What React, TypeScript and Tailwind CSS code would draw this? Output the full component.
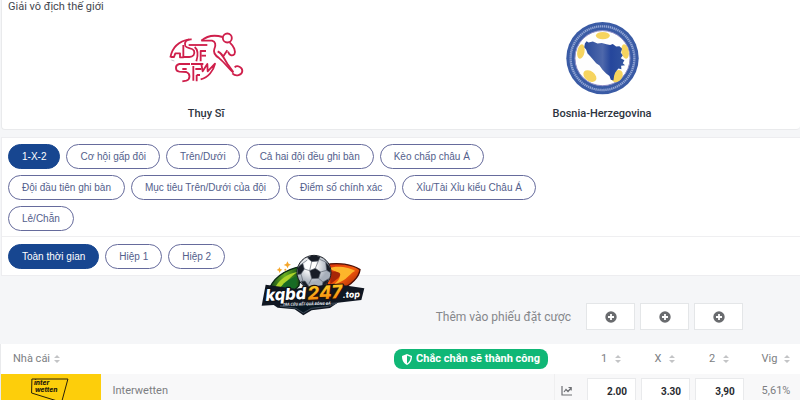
import { useState } from "react";

const MARKETS = [
  ["1-X-2", "Cơ hội gấp đôi", "Trên/Dưới", "Cả hai đội đều ghi bàn", "Kèo chấp châu Á"],
  ["Đội đầu tiên ghi bàn", "Mục tiêu Trên/Dưới của đội", "Điểm số chính xác", "Xỉu/Tài Xỉu kiểu Châu Á"],
  ["Lẻ/Chẵn"],
];
const PERIODS = ["Toàn thời gian", "Hiệp 1", "Hiệp 2"];
const OUTCOMES = ["1", "X", "2"];
const ODDS = ["2.00", "3.30", "3,90"];

function SwissLogo() {
  return (
    <svg viewBox="0 0 276 195" className="h-[65px] w-[92px]" fill="none" stroke="#cf1f4b" strokeWidth="5.5" strokeLinejoin="round" aria-label="Thụy Sĩ">
      <path d="M31 94C36 67 54 46 88 40" />
      <path d="M32 93H42L46 82H60V94H70V57" />
      <path d="M95 40C78 39 72 49 76 60C80 69 96 63 102 74C106 85 99 93 88 93H72" />
      <path d="M86 57H142" />
      <path d="M138 75H122V106M104 63C114 71 116 83 109 106" />
      <path d="M138 89H124" />
      <path d="M90 114H58C44 117 45 135 58 137L79 138C92 143 91 160 79 164L67 166" />
      <path d="M67 129H80M93 114H130M100 120V164M106 129H124M110 147V166" />
      <path d="M110 147H120M124 114L128 136L142 114L143 136L165 113C160 134 145 155 122 160" />
      <path d="M124 44C140 30 164 26 188 33" />
      <path d="M124 44H156C166 47 169 55 163 69C158 81 166 89 178 97C195 111 208 130 220 140" />
      <circle cx="202" cy="36" r="13.5" />
      <path d="M209 49C222 61 228 76 223 85C216 91 208 88 204 77" />
      <path d="M173 76C181 80 187 85 189 92L202 73M190 93L202 113L220 138" />
      <path d="M224 124C232 116 247 124 247 135C246 147 228 154 217 142" />
      <path d="M34 102L43 105" strokeWidth="2" stroke="#a8a8b0" />
    </svg>
  );
}

function BosniaLogo() {
  return (
    <svg viewBox="0 0 256 256" className="h-[85px] w-[85px]" aria-label="Bosnia-Herzegovina">
      <defs>
        <linearGradient id="bosniaMap" x1="0" x2="1">
          <stop offset="0" stopColor="#294a9b" />
          <stop offset="0.45" stopColor="#4e68ab" />
          <stop offset="0.65" stopColor="#25469c" />
          <stop offset="1" stopColor="#32549f" />
        </linearGradient>
      </defs>
      <circle cx="128" cy="127" r="109" fill="#3a5ba5" />
      <circle cx="128" cy="127" r="96" fill="none" stroke="#93a6d4" strokeWidth="7" strokeDasharray="4 2" />
      <circle cx="128" cy="127" r="83" fill="#fefefe" stroke="#8c8cc5" strokeWidth="3" />
      <g fill="#f6d45f">
        <ellipse cx="129" cy="59" rx="21" ry="11" />
        <ellipse cx="63" cy="107" rx="11" ry="22" transform="rotate(10 63 107)" />
        <ellipse cx="196" cy="107" rx="11" ry="22" transform="rotate(-10 196 107)" />
        <ellipse cx="90" cy="181" rx="22" ry="15" transform="rotate(38 90 181)" />
        <ellipse cx="172" cy="181" rx="20" ry="15" transform="rotate(-52 172 181)" />
      </g>
      <path
        d="M75 83L80 76L86 80L99 77L113 83L126 81L140 85L151 87L159 84L169 92L179 91L187 99L183 110L189 119L183 127L194 133L189 142L196 148L184 150L185 160L176 158L171 164L166 171L163 180L161 194L153 192L149 181L139 173L128 162L119 149L109 142L100 132L91 121L83 113L79 102L73 94Z"
        fill="url(#bosniaMap)"
      />
    </svg>
  );
}

function BrandLogo() {
  return (
    <svg viewBox="0 0 345 225" className="h-[75px] w-[115px]" aria-label="kqbd247.top">
      <defs>
        <linearGradient id="brandGreen" x1="0" x2="1">
          <stop offset="0" stopColor="#083b19" />
          <stop offset="0.5" stopColor="#68ae21" />
          <stop offset="1" stopColor="#0a4517" />
        </linearGradient>
        <linearGradient id="brandOrange" x1="0" x2="1" y2="1">
          <stop offset="0" stopColor="#d52c0b" />
          <stop offset="0.5" stopColor="#f45b0c" />
          <stop offset="1" stopColor="#8d1706" />
        </linearGradient>
        <linearGradient id="brandGold" x1="0" x2="0" y2="1">
          <stop offset="0" stopColor="#ffdc2b" />
          <stop offset="1" stopColor="#f37a09" />
        </linearGradient>
        <radialGradient id="brandBall" cx="0.4" cy="0.3">
          <stop offset="0.3" stopColor="#fff" />
          <stop offset="1" stopColor="#a7afba" />
        </radialGradient>
        <clipPath id="brandBallClip">
          <circle cx="177" cy="82" r="50" />
        </clipPath>
      </defs>
      <path d="M40 142C49 103 88 73 139 64L132 122L105 148Z" fill="url(#brandGreen)" stroke="#082713" strokeWidth="4" />
      <path d="M57 134C69 106 95 86 130 80C106 94 91 111 83 138Z" fill="#acd32a" />
      <path d="M71 137C83 114 101 101 126 94L124 127L99 144Z" fill="#176b24" />
      <path d="M211 60C248 50 293 59 315 74C312 98 290 119 251 138L218 130Z" fill="url(#brandOrange)" stroke="#4d1008" strokeWidth="4" />
      <path d="M220 71C246 59 286 69 301 78C286 82 280 105 237 119C260 99 265 84 220 71Z" fill="#fdb52b" />
      <path d="M225 80C248 77 265 83 250 99L226 118Z" fill="#a72608" />
      <circle cx="177" cy="82" r="51" fill="url(#brandBall)" stroke="#171b22" strokeWidth="3" />
      <g clipPath="url(#brandBallClip)" fill="#181d27" stroke="#59616c" strokeWidth="2">
        <path d="M164 77L181 70L197 81L191 100L170 101Z" />
        <path d="M157 38L172 29L197 34L190 48L170 50Z" />
        <path d="M128 67L143 55L148 72L138 87L126 89Z" />
        <path d="M212 51L229 69V85L215 76Z" />
        <path d="M138 109L150 108L163 126L152 137Z" />
        <path d="M204 111L221 101L219 123L200 128Z" />
        <path d="M170 50L164 77M190 48L181 70M148 72L164 77M143 55L157 45M197 81L215 76M212 51L194 43M191 100L204 111M170 101L161 118M138 87L144 109" fill="none" />
      </g>
      <path d="M32 119L121 131L236 116L328 130L319 165L248 173L225 189L170 196L145 211L119 193L68 188L56 180L20 182Z" fill="#101722" />
      <path d="M75 183L246 174L220 184L169 190L145 204L123 190Z" fill="#081722" stroke="#536171" strokeWidth="2" />
      <g transform="rotate(-3 170 155)" className="font-[Inter,sans-serif] font-extrabold italic" strokeLinejoin="round" paintOrder="stroke">
        <text x="32" y="161" fontSize="49" fill="#fff" stroke="#0c1119" strokeWidth="7">kqbd</text>
        <text x="158" y="164" fontSize="55" fill="url(#brandGold)" stroke="#251208" strokeWidth="7">247</text>
        <text x="263" y="164" fontSize="26" fill="#fff" stroke="#0c1119" strokeWidth="5">.top</text>
      </g>
      <text x="84" y="182" transform="rotate(-1 84 182)" className="font-['Open_Sans',sans-serif] font-bold italic" fontSize="11" fill="#e6e9ed">TRA CỨU KẾT QUẢ BÓNG ĐÁ</text>
      <g fill="#f5a62a">
        <path d="M97 49L101 56L108 59L101 62L98 70L94 63L86 60L94 56Z" />
        <path d="M73 66L76 72L82 74L77 77L74 84L71 77L65 75L71 71Z" />
        <circle cx="91" cy="74" r="3" />
      </g>
    </svg>
  );
}

function InterwettenLogo() {
  return (
    <svg viewBox="0 0 297 102" className="block h-[34px] w-full" aria-label="Interwetten">
      <path d="M92 15H200L181 85L91 57Z" fill="none" stroke="#28200a" strokeWidth="3" />
      <g className="font-[Inter,sans-serif] font-extrabold italic" fill="#28200a" fontSize="20">
        <text x="98" y="34">inter</text>
        <text x="101" y="53">wetten</text>
      </g>
    </svg>
  );
}

function SortIcon() {
  return (
    <svg viewBox="0 0 6 8" className="h-2 w-1.5 shrink-0" fill="#c3c4c6" aria-hidden="true">
      <path d="M3 0L6 3H0ZM3 8L0 5H6Z" />
    </svg>
  );
}

function PlusIcon() {
  return (
    <svg viewBox="0 0 12 12" className="h-3 w-3" aria-hidden="true">
      <circle cx="6" cy="6" r="5.7" fill="#696b6e" />
      <path d="M6 3V9M3 6H9" stroke="#fff" strokeWidth="1.8" />
    </svg>
  );
}

function Pill({ label, active, onClick }: { label: string; active: boolean; onClick: () => void }) {
  return (
    <button
      type="button"
      aria-pressed={active}
      onClick={onClick}
      className={`h-[25px] rounded-full border px-[13px] text-[10px] whitespace-nowrap ${
        active ? "border-[#174690] bg-[#174690] text-white" : "border-[#666b9c] bg-white text-[#53608c]"
      }`}
    >
      {label}
    </button>
  );
}

export default function App() {
  const [market, setMarket] = useState("1-X-2");
  const [period, setPeriod] = useState("Toàn thời gian");

  return (
    <div className="relative h-screen overflow-hidden bg-[#f5f6f8] font-[Roboto,sans-serif] text-[#2d3440]">
      <header className="ml-px h-[130px] rounded-b border-b border-l border-[#e9eaec] bg-white pl-1.5">
        <p className="h-4 text-[11px] leading-[14px] text-[#44474e]">Giải vô địch thế giới</p>
        <div className="grid grid-cols-2 text-center text-[11px] font-medium">
          <div className="flex flex-col items-center">
            <div className="flex h-[84px] items-center"><SwissLogo /></div>
            <h2 className="mt-1.5 leading-4">Thụy Sĩ</h2>
          </div>
          <div className="flex flex-col items-center">
            <div className="flex h-[84px] items-center"><BosniaLogo /></div>
            <h2 className="mt-1.5 leading-4">Bosnia-Herzegovina</h2>
          </div>
        </div>
      </header>

      <section className="mt-[7px] ml-px border border-r-0 border-[#ededf0] bg-white font-['Liberation_Sans',sans-serif]">
        <div className="flex flex-col gap-1.5 border-b border-[#efeff1] px-1.5 pt-1.5 pb-[5px]">
          {MARKETS.map((row) => (
            <div key={row[0]} className="flex flex-wrap gap-1.5">
              {row.map((m) => (
                <Pill key={m} label={m} active={market === m} onClick={() => setMarket(m)} />
              ))}
            </div>
          ))}
        </div>
        <div className="flex gap-1.5 px-1.5 pt-[7px] pb-1.5">
          {PERIODS.map((p) => (
            <Pill key={p} label={p} active={period === p} onClick={() => setPeriod(p)} />
          ))}
        </div>
      </section>

      <div className="flex items-center justify-end gap-[5px] pt-[27px] pr-[57px] pb-[14px]">
        <span className="mr-2.5 text-xs text-[#85878b]">Thêm vào phiếu đặt cược</span>
        {OUTCOMES.map((o) => (
          <button key={o} type="button" aria-label={`Thêm ${o}`} className="flex h-[27px] w-[49px] items-center justify-center border border-[#e4e6e8] bg-white">
            <PlusIcon />
          </button>
        ))}
      </div>

      <table className="w-full table-fixed border-collapse text-[11px] text-[#7c7e82]">
        <colgroup>
          <col className="w-[100px]" />
          <col />
          <col className="w-[30px]" />
          <col className="w-[54px]" />
          <col className="w-[54px]" />
          <col className="w-[54px]" />
          <col className="w-[54px]" />
        </colgroup>
        <thead>
          <tr className="h-[30px] bg-white">
            <th className="border-l border-[#e9eaec] p-0 pl-3 font-normal">
              <span className="flex items-center gap-1">Nhà cái <SortIcon /></span>
            </th>
            <th colSpan={2} className="p-0 pr-9">
              <span className="ml-auto flex h-5 w-fit items-center gap-1 rounded-lg bg-[#10b776] px-2 text-[11px] font-bold whitespace-nowrap text-white">
                <svg viewBox="0 0 10 11" className="h-[11px] w-2.5" aria-hidden="true">
                  <path d="M5 0L10 2C10 6 8.500 9.500 5 11C1.500 9.500 0 6 0 2Z" fill="#fff" />
                  <path d="M5 1.600V9.400C7.300 8 8.500 5.800 8.600 3Z" fill="#10b776" />
                </svg>
                Chắc chắn sẽ thành công
              </span>
            </th>
            {OUTCOMES.map((o) => (
              <th key={o} className="p-0 font-normal">
                <span className="flex items-center justify-center gap-2">{o} <SortIcon /></span>
              </th>
            ))}
            <th className="p-0 font-normal">
              <span className="flex items-center justify-center gap-[7px] pl-1.5">Vig <SortIcon /></span>
            </th>
          </tr>
        </thead>
        <tbody>
          <tr className="h-[34px] bg-[#f8f8f9]">
            <td className="border-l border-[#e9eaec] bg-[#fdce0b] p-0"><InterwettenLogo /></td>
            <td className="p-0 pl-3">Interwetten</td>
            <td className="border-l border-[#efeff0] p-0">
              <button type="button" aria-label="Biểu đồ" className="mx-auto block w-4">
                <svg viewBox="0 0 11 10" className="h-2.5 w-[11px]" fill="none" stroke="#6e7074" strokeWidth="1.200" aria-hidden="true">
                  <path d="M1 0V9H11M3 6L5 3.500L7 5.500L10 2M7.500 1.500H10.200V4.500" />
                </svg>
              </button>
            </td>
            {ODDS.map((o) => (
              <td key={o} className="p-0">
                <button type="button" className="mx-auto block h-[26px] w-[49px] border border-[#e9eaec] bg-white pl-3 text-[10px] font-bold text-[#292b30]">{o}</button>
              </td>
            ))}
            <td className="p-0 pl-1.5 text-center">5,61%</td>
          </tr>
        </tbody>
      </table>

      <div className="pointer-events-none absolute top-[245px] left-[255px]">
        <BrandLogo />
      </div>
    </div>
  );
}
